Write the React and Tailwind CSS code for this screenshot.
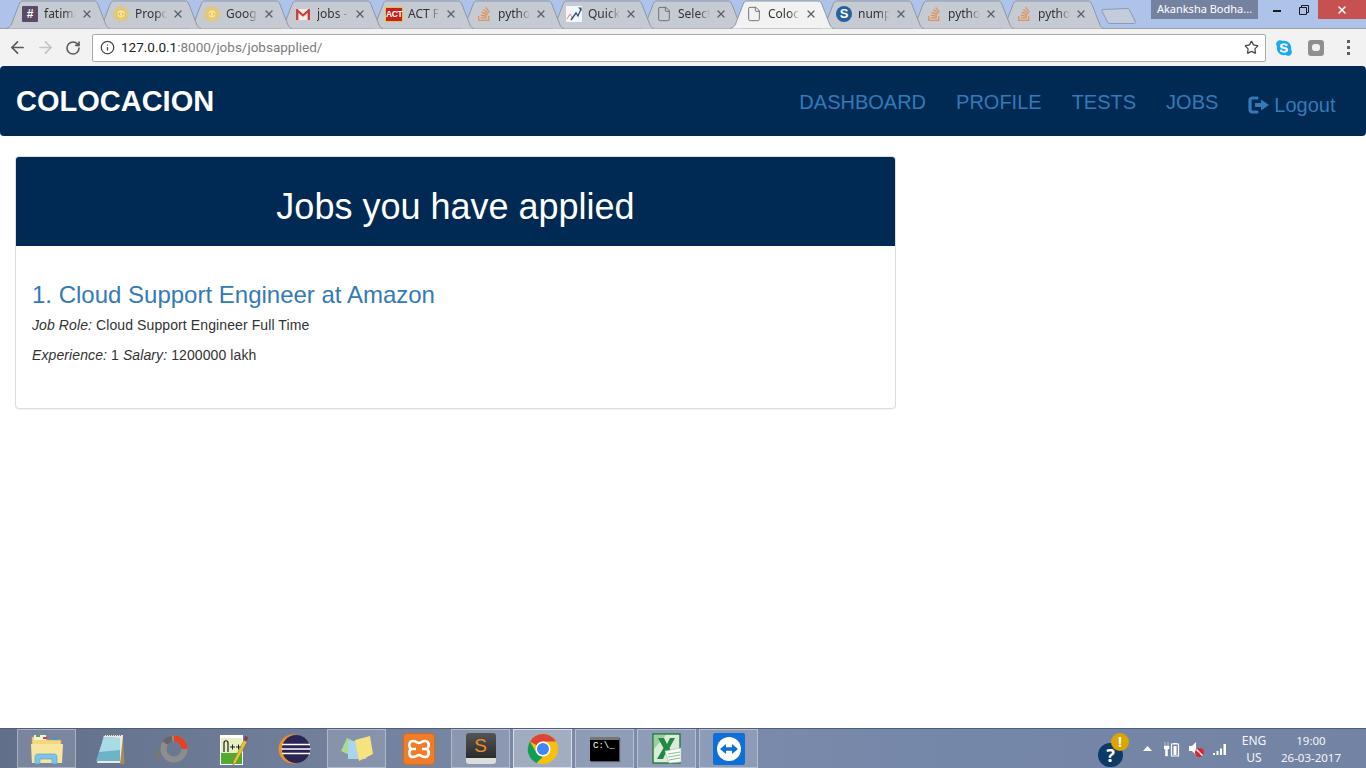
import React from 'react';
import { ArrowLeft, ArrowRight, RotateCw, Info, Star, X, File } from 'lucide-react';
import { FaStackOverflow, FaSkype } from 'react-icons/fa';

const Hash = () => (
  <div className="w-4 h-4 bg-[#5a4a66] rounded-[1px] flex items-center justify-center text-white text-[12px] font-bold leading-none font-['Liberation_Sans',sans-serif]">#</div>
);
const Gear = () => (
  <svg width="16" height="16" viewBox="0 0 16 16">
    <circle cx="8" cy="8" r="7.2" fill="none" stroke="#eec453" strokeWidth="1.6" strokeDasharray="2 1" />
    <circle cx="8" cy="8" r="5.6" fill="#f0c84f" />
    <circle cx="8" cy="8" r="3.4" fill="#f8e7a8" />
    <path d="M7 6.5 5.8 8 7 9.5M9 6.5 10.2 8 9 9.5" fill="none" stroke="#c99a2e" strokeWidth=".8" />
  </svg>
);
const Gmail = () => (
  <svg width="16" height="16" viewBox="0 0 16 16">
    <rect x="1" y="3" width="14" height="11" fill="#eee" />
    <path d="M1 14V3h1.5L8 8l5.5-5H15v11h-2.4V6.8L8 10.8 3.4 6.8V14Z" fill="#c9433a" />
  </svg>
);
const Act = () => (
  <div className="shrink-0 w-[18px] h-[15px] bg-[#c8201f] text-white text-[8.500px] font-bold leading-[13px] text-center font-['Liberation_Sans',sans-serif] border border-[#e7c23c] tracking-[-0.4px] whitespace-nowrap">ACT</div>
);
const So = () => <FaStackOverflow className="w-4 h-4 text-[#e2915a]" />;
const Quick = () => (
  <svg width="16" height="16" viewBox="0 0 16 16">
    <rect width="16" height="16" fill="#f4f6f8" />
    <path d="M1 13 4 8l3 5" fill="none" stroke="#e08a80" strokeWidth="1" />
    <path d="M5 14 10 7l2 3 3-7" fill="none" stroke="#24537f" strokeWidth="1.3" />
    <path d="M12 1.5h3.5V5Z" fill="#24537f" />
  </svg>
);
const Doc = () => <File className="w-4 h-4 text-[#5f6368]" strokeWidth={1.3} />;
const Numpy = () => (
  <div className="w-4 h-4 rounded-full bg-[#27609f] text-white text-[13px] font-bold leading-4 text-center font-['Liberation_Sans',sans-serif]">S</div>
);

const tabs = [
  { t: 'fatima', I: Hash, m: 0 },
  { t: 'Propo', I: Gear, m: 91 },
  { t: 'Goog', I: Gear, m: 91 },
  { t: 'jobs -', I: Gmail, m: 91 },
  { t: 'ACT F', I: Act, m: 91 },
  { t: 'pytho', I: So, m: 90 },
  { t: 'Quick', I: Quick, m: 90 },
  { t: 'Select', I: Doc, m: 90 },
  { t: 'Coloc', I: Doc, m: 90, active: true },
  { t: 'nump', I: Numpy, m: 90 },
  { t: 'pytho', I: So, m: 90 },
  { t: 'pytho', I: So, m: 90 },
];

const Tab = ({ t, I, m, active, z }) => (
  <div
    className="relative shrink-0 w-[104px] h-[29px] flex items-center pl-[16px] pb-[1px]"
    style={{ marginLeft: m ? m - 104 : 0, zIndex: active ? 40 : z }}
  >
    <svg className="absolute inset-0" width="104" height="29" viewBox="0 0 104 29">
      <path
        d="M0 28.5C3 28 4.5 26 5.5 24L13 4.5C14 2 15 1 17 1L88 1C90 1 91 2 92 4.5L100 25C101 27 102 28 104 28.5Z"
        fill={active ? '#f2f2f2' : '#c6cad3'}
      />
      <path
        d="M0 28.5C3 28 4.5 26 5.5 24L13 4.5C14 2 15 1 17 1L88 1C90 1 91 2 92 4.5L100 25C101 27 102 28 104 28.5"
        fill="none"
        stroke="#8f97a6"
      />
    </svg>
    <div className="relative w-4 h-4 shrink-0 flex items-center justify-center"><I /></div>
    <div className="relative ml-[6px] w-[32px] overflow-hidden whitespace-nowrap text-[12px] leading-4 text-[#333] [mask-image:linear-gradient(to_right,black_65%,transparent)]">{t}</div>
    <X className="relative ml-[4.5px] w-[12px] h-[12px] text-[#5a5f68] shrink-0" strokeWidth={2.6} />
  </div>
);

const TabStrip = () => (
  <div className="relative h-[28px] bg-[#aec3ea] flex items-start shrink-0 pl-[6px] z-10">
    {tabs.map((x, i) => <Tab key={i} {...x} z={30 - i} />)}
    <svg className="shrink-0 ml-[-3px] mt-[7px]" width="36" height="18" viewBox="0 0 36 18">
      <path d="M1.5 2.5 26 1.5C27 1.5 28 2 28.5 3L34.500 15C35 16 34 16.500 33 16.500H9C8 16.500 7 16 6.500 15L1 4C.7 3 1 2.500 1.500 2.500Z" fill="#c3cbdc" stroke="#8c9ab3" />
    </svg>
    <div className="ml-auto flex items-start h-[19px]">
      <div className="w-[107px] h-[19px] bg-[#75829f] text-white text-[11px] leading-[18px] text-center whitespace-nowrap">Akanksha Bodha...</div>
      <div className="w-[60px] h-[19px] flex items-center justify-end pr-[9px] gap-[18px]">
        <div className="w-2 h-[2px] bg-[#1b1b1b] mt-[3px]" />
        <svg width="10" height="10" viewBox="0 0 10 10">
          <path d="M.5 2.500h7v7h-7ZM2.500 2.500v-2h7v7h-2" fill="none" stroke="#1b1b1b" />
        </svg>
      </div>
      <div className="w-[48px] h-[19px] bg-[#c75050] flex items-center justify-center">
        <X className="w-[12px] h-[12px] text-white" strokeWidth={3} />
      </div>
    </div>
  </div>
);

const Toolbar = () => (
  <div className="relative h-[38px] bg-[#f2f2f2] border-t border-[#a0a0a0] flex items-center pl-[8px] shrink-0">
    <ArrowLeft className="w-[19px] h-[19px] text-[#5a5a5a]" strokeWidth={2.2} />
    <ArrowRight className="w-[19px] h-[19px] text-[#c4c4c4] ml-[9px]" strokeWidth={2.2} />
    <RotateCw className="w-[16px] h-[16px] text-[#5a5a5a] ml-[10px]" strokeWidth={2.4} />
    <div className="ml-[11px] w-[1174px] h-[28px] bg-white border border-[#a9a9a9] rounded-[2px] flex items-center pl-[7px] pr-[6px]">
      <Info className="w-[15px] h-[15px] text-[#444]" strokeWidth={2} />
      <div className="ml-[6px] text-[13.500px] font-['Roboto',sans-serif] text-[#222] whitespace-nowrap">127.0.0.1<span className="text-[#7d7d7d]">:8000/jobs/jobsapplied/</span></div>
      <Star className="ml-auto w-[15px] h-[15px] text-[#444]" strokeWidth={2} />
    </div>
    <FaSkype className="ml-[9px] w-[18px] h-[18px] text-[#1ba8ef]" />
    <div className="ml-[15px] w-[16px] h-[16px] rounded-[3px] bg-[#8f8f8f] flex items-center justify-center">
      <div className="w-[8px] h-[7px] rounded-[3px] bg-[#f2f2f2]" />
    </div>
    <div className="ml-[23px] flex flex-col gap-[3px]">
      <div className="w-[3px] h-[3px] bg-[#5f5f5f]" />
      <div className="w-[3px] h-[3px] bg-[#5f5f5f]" />
      <div className="w-[3px] h-[3px] bg-[#5f5f5f]" />
    </div>
  </div>
);

const LogoutIcon = () => (
  <svg width="22" height="20" viewBox="0 0 22 20" className="shrink-0">
    <path d="M9 3H4.500A2.500 2.500 0 0 0 2 5.500v9A2.500 2.500 0 0 0 4.500 17H9" fill="none" stroke="#337ab7" strokeWidth="3.200" strokeLinecap="round" />
    <path d="M7 8h6V4.500L21 10l-8 5.500V12H7Z" fill="#337ab7" />
  </svg>
);

const Navbar = () => (
  <nav className="h-[70px] bg-[#002a54] rounded-[4px] flex items-center pl-[16px] pr-[30.500px] shrink-0 font-['Liberation_Sans',Arial,sans-serif]">
    <div className="text-white font-bold text-[29px] leading-none mt-[1px]">COLOCACION</div>
    <div className="ml-auto flex items-center text-[20px] text-[#337ab7] mt-[2px]">
      <span>DASHBOARD</span>
      <span className="ml-[30px]">PROFILE</span>
      <span className="ml-[30px]">TESTS</span>
      <span className="ml-[30px]">JOBS</span>
      <span className="ml-[30px] mt-[6px] flex items-center gap-[4px]"><LogoutIcon />Logout</span>
    </div>
  </nav>
);

const Card = () => (
  <div className="mt-[20px] ml-[15px] w-[881px] h-[253px] border border-[#ddd] rounded-[4px] bg-white overflow-hidden font-['Liberation_Sans',Arial,sans-serif] shadow-[0_1px_1px_rgba(0,0,0,0.05)]">
    <div className="h-[89px] pt-[10px] bg-[#002a54] flex items-center justify-center text-white text-[36px]">Jobs you have applied</div>
    <div className="pt-[35px] px-[16px]">
      <h3 className="text-[24px] leading-[27px] text-[#337ab7]">1. Cloud Support Engineer at Amazon</h3>
      <p className="mt-[7px] text-[14px] leading-[20px] text-[#333] tracking-[0.1px]"><em>Job Role:</em> Cloud Support Engineer Full Time</p>
      <p className="mt-[10px] text-[14px] leading-[20px] text-[#333] tracking-[0.1px]"><em>Experience:</em> 1 <em>Salary:</em> 1200000 lakh</p>
    </div>
  </div>
);

const Folder = () => (
  <svg width="34" height="32" viewBox="0 0 34 32">
    <path d="M2 4h13l2 3h14v22H2Z" fill="#f3d87e" stroke="#c7a650" strokeWidth=".6" />
    <rect x="4" y="2" width="12" height="5" fill="#f7f1dc" />
    <rect x="6" y="2" width="4" height="2" fill="#3bb54a" />
    <rect x="13" y="4" width="4" height="2" fill="#d94135" />
    <rect x="23" y="5" width="4" height="2" fill="#2d9cdb" />
    <path d="M1 11h32l-1 19H2Z" fill="#f8e6a0" />
    <path d="M5 31v-7c0-2 1-3 3-3h16c2 0 3 1 3 3v7h-5v-5H10v5Z" fill="#7fc4e6" stroke="#4a9cc7" strokeWidth=".6" />
  </svg>
);
const Notepad = () => (
  <svg width="32" height="34" viewBox="0 0 32 34">
    <path d="M11 3h19v28H4Z" fill="#ece9e0" />
    <path d="M30 4l1.500 28H27Z" fill="#a58a5a" />
    <path d="M11 5 27 6V29H3Z" fill="#6fb3c9" />
    <path d="M11 5 27 6V18L6 20Z" fill="#a9dbe6" />
    <path d="M11 3h18" stroke="#777" strokeWidth="2" strokeDasharray="1 1" />
  </svg>
);
const Picasa = () => (
  <svg width="34" height="30" viewBox="0 0 34 30">
    <path d="M4 26C1 22 5 18 8 15" fill="none" stroke="#777" strokeWidth="4" />
    <circle cx="20" cy="15" r="10.500" fill="none" stroke="#8d8d8d" strokeWidth="6" />
    <path d="M20 4.500A10.500 10.500 0 0 1 30.500 15" fill="none" stroke="#e5401f" strokeWidth="6" />
    <path d="M11 9A10.500 10.500 0 0 1 18 4.800" fill="none" stroke="#666" strokeWidth="6" />
  </svg>
);
const NotepadPP = () => (
  <svg width="32" height="34" viewBox="0 0 32 34">
    <rect x="3" y="3" width="23" height="30" fill="#fff" />
    <path d="M4 6h21v26H4Z" fill="#e7f0c4" />
    <path d="M4 21h21v11H4Z" fill="#55a92e" />
    <path d="M7 20V11c0-3 4-3 4 0v9" fill="none" stroke="#222" strokeWidth="1.200" />
    <path d="M13 15h5M15.500 12.500v5M19 15h5M21.500 12.500v5" stroke="#222" strokeWidth="1" />
    <path d="M16 30 27 8l3 2-11 21-3 2Z" fill="#e3c235" stroke="#7a6a20" strokeWidth=".5" />
    <path d="M27 8l1-4 3 1-1 4Z" fill="#8a3b4a" />
  </svg>
);
const Eclipse = () => (
  <svg width="34" height="32" viewBox="0 0 34 32">
    <circle cx="15" cy="16" r="14.500" fill="#e8902a" />
    <circle cx="18" cy="16" r="14" fill="#2c2455" />
    <path d="M4 11.500h28M3.500 16h29M4 20.500h28" stroke="#fff" strokeWidth="1.600" />
  </svg>
);
const Sticky = () => (
  <svg width="34" height="30" viewBox="0 0 34 30">
    <path d="M7 4 18 9 12 22 1 17Z" fill="#a9dc8f" />
    <rect x="8" y="7" width="18" height="18" fill="#a9d5f0" />
    <path d="M15 6 30 2 33 20 19 27Z" fill="#f7e37d" />
  </svg>
);
const Xampp = () => (
  <div className="w-[32px] h-[32px] rounded-[4px] bg-[#ee7c28] flex items-center justify-center border border-[#d96a1c]">
    <svg width="26" height="24" viewBox="0 0 26 24">
      <path d="M7 4C10 4 11 6 13 6C15 6 16 4 19 4C23 4 24 9 21 12C24 15 23 20 19 20C16 20 15 18 13 18C11 18 10 20 7 20C3 20 2 15 5 12C2 9 3 4 7 4Z" fill="none" stroke="#fff" strokeWidth="2.600" />
      <path d="M5 12H10M21 12H16" stroke="#fff" strokeWidth="2.600" />
    </svg>
  </div>
);
const Sublime = () => (
  <div className="w-[30px] h-[31px] rounded-[3px] bg-[linear-gradient(#555,#2c2c2c_80%,#ddd_80%)] flex items-start justify-center pt-[1px]">
    <span className="text-[#f08a2c] text-[19px] leading-[24px] font-['Liberation_Sans',sans-serif]">S</span>
  </div>
);
const Chrome = () => (
  <svg width="32" height="32" viewBox="0 0 32 32">
    <circle cx="16" cy="16" r="15" fill="#f4c20d" />
    <path d="M16 1A15 15 0 0 1 29 8.500H16A7.500 7.500 0 0 0 9.500 12.200L3 8.500A15 15 0 0 1 16 1Z" fill="#db4437" />
    <path d="M3 8.500 9.500 20A7.500 7.500 0 0 0 16 23.500L9.500 30A15 15 0 0 1 3 8.500Z" fill="#0f9d58" />
    <circle cx="16" cy="16" r="7.500" fill="#fff" />
    <circle cx="16" cy="16" r="6" fill="#4285f4" />
  </svg>
);
const Cmd = () => (
  <div className="w-[29px] h-[24px] bg-black border-t-[3px] border-[#777] shadow-[1px_1px_1px_rgba(0,0,0,0.4)] text-white text-[9px] leading-[12px] pl-[3px] font-['Liberation_Mono',monospace] whitespace-nowrap">C:\_</div>
);
const Excel = () => (
  <svg width="30" height="32" viewBox="0 0 30 32">
    <rect x="1" y="1" width="27" height="29" fill="#dcebd8" stroke="#1f7a3c" strokeWidth="1.400" />
    <path d="M2 2h12L2 16Z" fill="#9ccf9c" />
    <path d="M6 5h6l3 6 3-6h5l-5.500 10L23 26h-6l-3-6.500L11 26H5l6.500-11Z" fill="#1f8a44" />
    <path d="M13 18 29 15V29L17 30Z" fill="#fafcf8" stroke="#9fbfa5" strokeWidth=".6" />
    <path d="M16 21 28 19M16 24 28 22M17 27 28 25" stroke="#8bbd96" />
  </svg>
);
const Team = () => (
  <div className="w-[32px] h-[32px] rounded-[2px] bg-[#0e6fd6] flex items-center justify-center">
    <svg width="26" height="26" viewBox="0 0 26 26">
      <circle cx="13" cy="13" r="12" fill="#fff" />
      <path d="M4 13l6-5v3.200h6V8l6 5-6 5v-3.200h-6V18Z" fill="#0e6fd6" />
    </svg>
  </div>
);

const apps = [
  { I: Folder, s: 1 }, { I: Notepad }, { I: Picasa }, { I: NotepadPP }, { I: Eclipse }, { I: Sticky, s: 1 },
  { I: Xampp }, { I: Sublime, s: 1 }, { I: Chrome, s: 2 }, { I: Cmd, s: 1 }, { I: Excel, s: 1 }, { I: Team, s: 1 },
];

const AppBtn = ({ I, s }) => (
  <div className={`w-[59px] flex items-center justify-center border ${s === 2 ? 'bg-white/30 border-white/60' : s === 1 ? 'bg-white/15 border-white/35' : 'border-transparent'}`}>
    <I />
  </div>
);

const Tray = () => (
  <div className="ml-auto flex items-center self-center h-full text-white text-[12px]">
    <div className="relative w-[31px] h-[28px] mt-[4px]">
      <div className="absolute left-0 bottom-[-2px] w-[25px] h-[24px] rounded-full bg-[#0d3a66] text-white font-bold text-[18px] leading-[24px] text-center">?</div>
      <div className="absolute right-0 top-[-4px] w-[18px] h-[18px] rounded-full bg-[#dda400] text-white font-bold text-[14px] leading-[18px] text-center">!</div>
    </div>
    <svg className="ml-[14px]" width="9" height="5" viewBox="0 0 9 5"><path d="M0 5 4.500 0 9 5Z" fill="#fff" /></svg>
    <svg className="ml-[12px]" width="16" height="16" viewBox="0 0 16 16">
      <path d="M1 1v4M4 1v4M0 5h5v3H3.500v7H1.500V8H0Z" fill="#fff" stroke="#fff" strokeWidth=".5" />
      <path d="M7.500 3h7v12h-7Z" fill="none" stroke="#fff" strokeWidth="1.200" />
      <path d="M9 2h4v1H9ZM9.500 5h3v9h-3Z" fill="#fff" />
    </svg>
    <svg className="ml-[8px]" width="16" height="16" viewBox="0 0 16 16">
      <path d="M1 5h3l4-4v13L4 10H1Z" fill="#fff" />
      <circle cx="11.500" cy="11.500" r="4.500" fill="#e3212b" />
      <path d="M8.500 8.500l6 6" stroke="#fff" strokeWidth="1.500" />
    </svg>
    <svg className="ml-[8px]" width="16" height="14" viewBox="0 0 16 14">
      <path d="M1 11h2v2H1ZM4.500 9h2v4h-2ZM8 6.500h2V13H8ZM11.500 2h2.500v11h-2.500Z" fill="#fff" />
    </svg>
    <div className="ml-[12px] w-[28px] text-center leading-[17px] text-[#f4f6fa] whitespace-nowrap">ENG<br />US</div>
    <div className="ml-[8px] w-[70px] text-center text-[11.500px] leading-[17px] text-[#f4f6fa] whitespace-nowrap">19:00<br />26-03-2017</div>
    <div className="w-[20px]" />
  </div>
);

const Taskbar = () => (
  <div className="mt-auto h-[40px] shrink-0 border-t border-[#4e5d78] bg-[linear-gradient(90deg,#616f8b,#6f7d98_20%,#7c8cab_45%,#7587a9_70%,#7383a3)] flex items-stretch pl-[17px] gap-[3px]">
    {apps.map((a, i) => <AppBtn key={i} {...a} />)}
    <Tray />
  </div>
);

export default function App() {
  return (
    <div className="w-[1366px] h-[768px] overflow-hidden bg-white flex flex-col font-['Noto_Sans',sans-serif]">
      <TabStrip />
      <Toolbar />
      <Navbar />
      <Card />
      <Taskbar />
    </div>
  );
}
